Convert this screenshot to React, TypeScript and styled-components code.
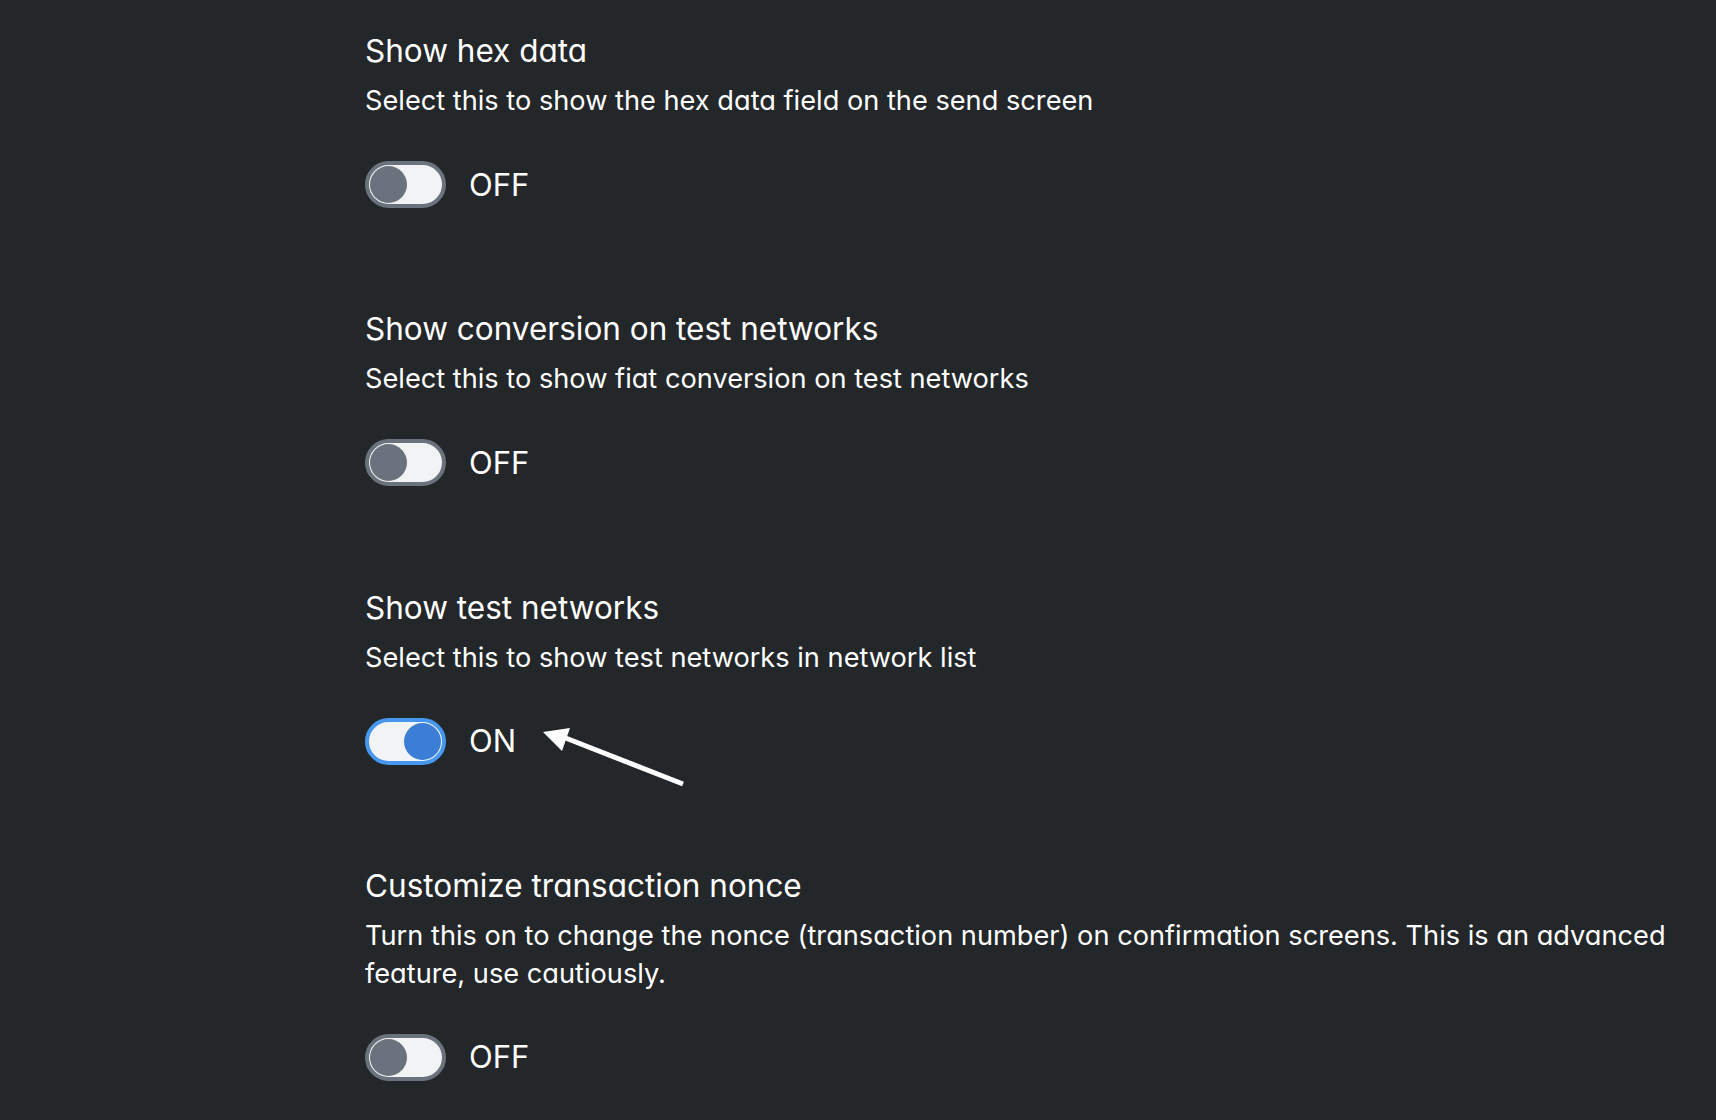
import React from "react";
import styled, { createGlobalStyle } from "styled-components";

const GlobalStyle = createGlobalStyle`
  html, body {
    margin: 0;
    padding: 0;
    background: #24272a;
  }
`;

const Page = styled.div({
  minHeight: "100vh",
  boxSizing: "border-box",
  backgroundColor: "#24272a",
  color: "#ffffff",
  fontFamily: "Inter, 'Noto Sans', sans-serif",
  fontFeatureSettings: "'cv11'",
  padding: "31px 40px 0 365px",
});

const Section = styled.div({
  display: "flex",
  flexDirection: "column",
  alignItems: "flex-start",
  paddingBottom: 101.3,
});

const Title = styled.div({
  fontSize: 31.5,
  lineHeight: "40px",
  fontWeight: 400,
});

const Description = styled.div({
  marginTop: 11,
  fontSize: 27.2,
  lineHeight: "38px",
});

const ToggleRow = styled.div({
  position: "relative",
  display: "flex",
  alignItems: "center",
  gap: 23,
  marginTop: 41,
  height: 47,
});

const Track = styled.div<{ $on: boolean }>`
  box-sizing: border-box;
  width: 81px;
  height: 47px;
  border-radius: 24px;
  border: 4px solid ${(p) => (p.$on ? "#4697ee" : "#6a737d")};
  background: #f2f3f4;
  display: flex;
  align-items: center;
  justify-content: ${(p) => (p.$on ? "flex-end" : "flex-start")};
  padding: 0 1px;
`;

const Knob = styled.div<{ $on: boolean }>`
  width: 37px;
  height: 37px;
  border-radius: 50%;
  background: ${(p) => (p.$on ? "#3a7fd5" : "#6a737d")};
`;

const ToggleLabel = styled.span({
  fontSize: 31,
  lineHeight: "40px",
});

const Arrow = styled.svg({
  position: "absolute",
  left: 178,
  top: 1,
  overflow: "visible",
});

type Setting = {
  title: string;
  description: string;
  on: boolean;
  pointed?: boolean;
};

const settings: Setting[] = [
  {
    title: "Show hex data",
    description: "Select this to show the hex data field on the send screen",
    on: false,
  },
  {
    title: "Show conversion on test networks",
    description: "Select this to show fiat conversion on test networks",
    on: false,
  },
  {
    title: "Show test networks",
    description: "Select this to show test networks in network list",
    on: true,
    pointed: true,
  },
  {
    title: "Customize transaction nonce",
    description:
      "Turn this on to change the nonce (transaction number) on confirmation screens. This is an advanced feature, use cautiously.",
    on: false,
  },
];

function App() {
  return (
    <>
      <GlobalStyle />
      <Page>
        {settings.map((s) => (
          <Section key={s.title}>
            <Title>{s.title}</Title>
            <Description>{s.description}</Description>
            <ToggleRow>
              <Track $on={s.on}>
                <Knob $on={s.on} />
              </Track>
              <ToggleLabel>{s.on ? "ON" : "OFF"}</ToggleLabel>
              {s.pointed && (
                <Arrow width="150" height="70" viewBox="0 0 150 70">
                  <line x1="20" y1="18" x2="140" y2="65" stroke="#fff" strokeWidth="5" />
                  <polygon points="0,13 27,9 19,32" fill="#fff" />
                </Arrow>
              )}
            </ToggleRow>
          </Section>
        ))}
      </Page>
    </>
  );
}

export default App;
